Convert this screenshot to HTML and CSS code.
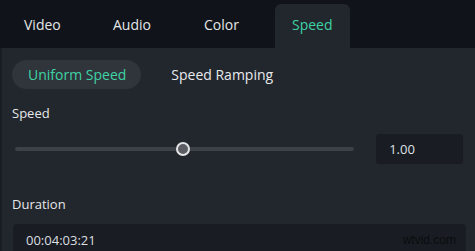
FILE: index.html
```html
<!DOCTYPE html>
<html lang="en">
<head>
    <meta charset="UTF-8">
    <meta name="viewport" content="width=device-width, initial-scale=1.0">
    <title>Speed</title>
    <link rel="stylesheet" href="styles.css">
</head>
<body>
    <div class="tabs">
        <div class="tab video">Video</div>
        <div class="tab audio">Audio</div>
        <div class="tab color">Color</div>
        <div class="tab active">Speed</div>
    </div>
    <div class="panel">
        <div class="modes">
            <div class="mode active">Uniform Speed</div>
            <div class="mode">Speed Ramping</div>
        </div>
        <div class="label">Speed</div>
        <div class="slider-row">
            <div class="slider">
                <div class="track"></div>
                <div class="thumb"></div>
            </div>
            <div class="value">1.00</div>
        </div>
        <div class="label duration-label">Duration</div>
        <div class="duration">
            <span>00:04:03:21</span>
            <span class="mark">wtvid.com</span>
        </div>
    </div>
</body>
</html>
```

FILE: styles.css
```css
body {
    margin: 0;
    width: 475px;
    height: 251px;
    overflow: hidden;
    background: #22262d;
    font-family: "Open Sans", "Noto Sans", sans-serif;
    color: #e6e8ea;
}
.tabs {
    display: flex;
    height: 48px;
    padding: 4px 0 0 24px;
    box-sizing: border-box;
    background: #10141a;
}
.tab {
    display: flex;
    align-items: center;
    font-size: 14px;
    color: #e4e6e8;
    padding-bottom: 4px;
    box-sizing: border-box;
}
.tab.video {
    width: 89px;
}
.tab.audio {
    width: 91px;
}
.tab.color {
    width: 71px;
}
.tab.active {
    width: 75px;
    padding-left: 17px;
    background: #22262d;
    border-radius: 6px 6px 0 0;
    color: #3fd3a4;
}
.panel {
    padding: 12px 12px 0 12px;
    border-left: 2px solid #1a1d22;
}
.modes {
    display: flex;
    align-items: center;
    gap: 30px;
}
.mode {
    font-size: 14px;
    color: #e8eaec;
}
.mode.active {
    background: #30353c;
    color: #3fd3a4;
    border-radius: 15px;
    height: 29px;
    line-height: 29px;
    padding: 0 15px 0 16px;
    margin-left: -2px;
}
.label {
    font-size: 13px;
    color: #e6e8ea;
    margin-top: 15px;
    margin-left: -2px;
}
.slider-row {
    display: flex;
    align-items: center;
    margin-top: 12px;
}
.slider {
    position: relative;
    width: 340px;
    height: 16px;
    margin-left: 1px;
}
.track {
    position: absolute;
    left: 0;
    right: 0;
    top: 6px;
    height: 4px;
    border-radius: 2px;
    background: #3c4148;
}
.thumb {
    position: absolute;
    left: 161px;
    top: 1px;
    width: 10px;
    height: 10px;
    border: 2.5px solid #e4e5e7;
    border-radius: 50%;
    background: #5a5e64;
}
.value {
    margin-left: 22px;
    width: 87px;
    height: 30px;
    line-height: 30px;
    background: #191d23;
    border-radius: 3px;
    font-size: 13px;
    color: #dfe1e4;
    padding-left: 13px;
    box-sizing: border-box;
}
.duration-label {
    margin-top: 31px;
}
.duration {
    display: flex;
    justify-content: space-between;
    align-items: center;
    margin-top: 11px;
    margin-left: -1px;
    width: 453px;
    height: 32px;
    background: #191d23;
    border-radius: 4px;
    padding: 0 10px 0 13px;
    box-sizing: border-box;
    font-size: 13px;
    color: #dcdee1;
}
.mark {
    font-family: "Liberation Sans", Arial, sans-serif;
    font-size: 12px;
    color: #0a0c0e;
    margin-top: -1px;
}
```
